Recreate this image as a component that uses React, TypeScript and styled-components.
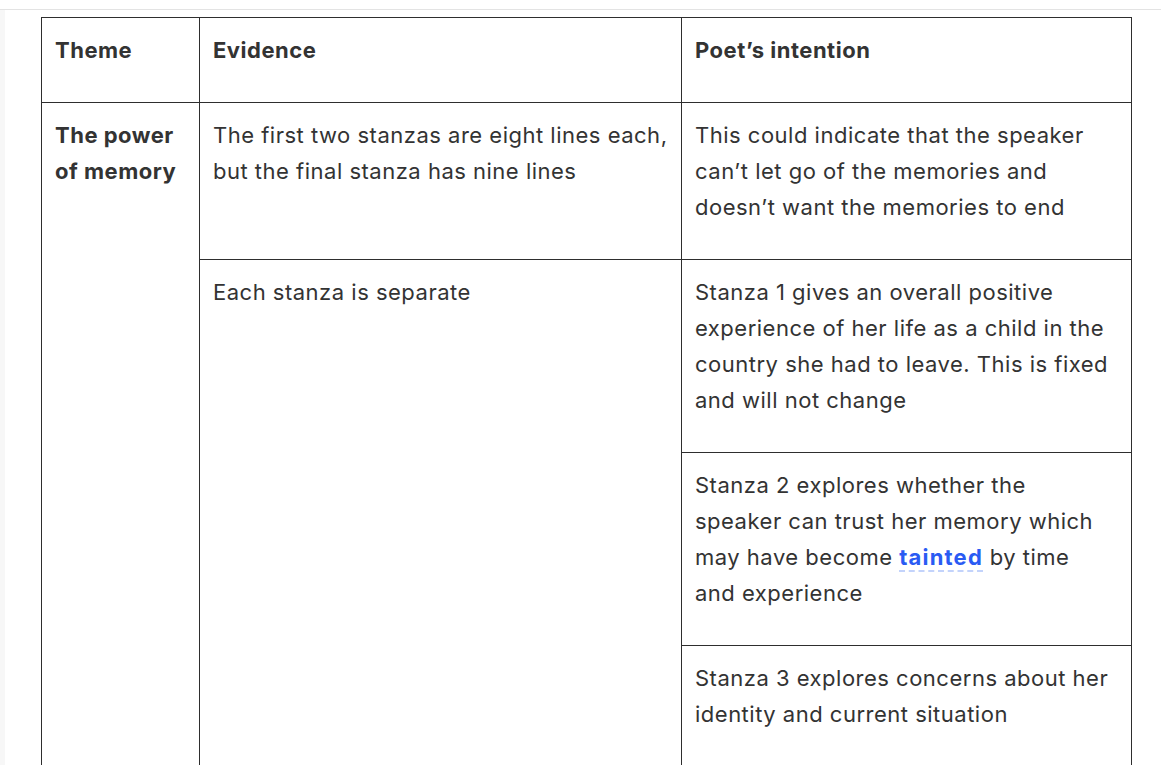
import styled, { createGlobalStyle } from 'styled-components';

const GlobalStyle = createGlobalStyle`
  html, body {
    margin: 0;
    padding: 0;
    background: #ffffff;
  }
  body {
    font-family: Inter, "Noto Sans", sans-serif;
    color: #333333;
  }
`;

const Page = styled.div`
  display: flex;
  flex-direction: column;
  height: 765px;
  overflow: hidden;
`;

const TopBar = styled.div`
  height: 9px;
  flex-shrink: 0;
  border-bottom: 1px solid #e3e3e3;
`;

const Body = styled.div`
  display: flex;
  flex: 1;
`;

const Strip = styled.div`
  width: 5px;
  background: #f7f7f7;
`;

const Content = styled.div`
  flex: 1;
  padding: 7px 0 0 36px;
`;

const Table = styled.table`
  border-collapse: collapse;
  table-layout: fixed;
  width: 1091px;
  font-size: 22px;
  line-height: 36px;
  letter-spacing: 0.5px;
`;

const Cell = styled.td<{ $bold?: boolean; $wide?: boolean }>`
  border: 1px solid #2e2e2e;
  padding: 14px ${(p) => (p.$wide ? 18 : 13)}px 34px 13px;
  vertical-align: top;
  text-align: left;
  font-weight: ${(p) => (p.$bold ? 700 : 400)};
`;

const HeadCell = styled.th`
  border: 1px solid #2e2e2e;
  padding: 14px 13px 34px;
  vertical-align: top;
  text-align: left;
  font-weight: 700;
`;

const Term = styled.span`
  color: #2a5bf3;
  font-weight: 700;
  letter-spacing: 1.2px;
  text-decoration: underline dashed #c3d3fb;
  text-decoration-thickness: 2px;
  text-underline-offset: 5px;
`;

export default function App() {
  return (
    <>
      <GlobalStyle />
      <Page>
        <TopBar />
        <Body>
          <Strip />
          <Content>
            <Table>
              <colgroup>
                <col style={{ width: 158 }} />
                <col style={{ width: 482 }} />
                <col />
              </colgroup>
              <thead>
                <tr>
                  <HeadCell>Theme</HeadCell>
                  <HeadCell>Evidence</HeadCell>
                  <HeadCell>Poet’s intention</HeadCell>
                </tr>
              </thead>
              <tbody>
                <tr>
                  <Cell $bold rowSpan={4}>
                    The power of memory
                  </Cell>
                  <Cell>
                    The first two stanzas are eight lines each, but the final stanza has nine lines
                  </Cell>
                  <Cell $wide>
                    This could indicate that the speaker can’t let go of the memories and doesn’t
                    want the memories to end
                  </Cell>
                </tr>
                <tr>
                  <Cell rowSpan={3}>Each stanza is separate</Cell>
                  <Cell $wide>
                    Stanza 1 gives an overall positive experience of her life as a child in the
                    country she had to leave. This is fixed and will not change
                  </Cell>
                </tr>
                <tr>
                  <Cell $wide>
                    Stanza 2 explores whether the speaker can trust her memory which may have
                    become <Term>tainted</Term> by time and experience
                  </Cell>
                </tr>
                <tr>
                  <Cell $wide>
                    Stanza 3 explores concerns about her identity and current situation
                  </Cell>
                </tr>
              </tbody>
            </Table>
          </Content>
        </Body>
      </Page>
    </>
  );
}
